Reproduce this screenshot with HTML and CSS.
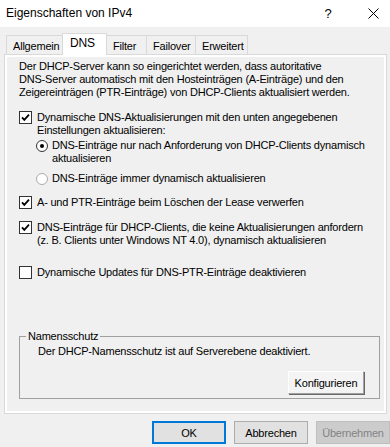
FILE: index.html
```html
<!DOCTYPE html>
<html lang="de">

<head>
  <meta charset="UTF-8">
  <meta name="viewport" content="width=device-width, initial-scale=1.0">
  <title>Eigenschaften von IPv4</title>
  <link rel="stylesheet" href="styles.css">
</head>

<body>
  <div class="titlebar">
    <span class="title">Eigenschaften von IPv4</span>
    <span class="help">?</span>
    <span class="close">
      <svg width="11" height="11" viewBox="0 0 11 11"><path d="M0.5 0.5 L10.5 10.5 M10.5 0.5 L0.5 10.5" stroke="#000" stroke-width="1" fill="none" /></svg>
    </span>
  </div>

  <div class="content">
    <div class="tabs">
      <div class="tab tab-general">Allgemein</div>
      <div class="tab tab-dns active">DNS</div>
      <div class="tab tab-filter">Filter</div>
      <div class="tab tab-failover">Failover</div>
      <div class="tab tab-advanced">Erweitert</div>
    </div>

    <div class="panel">
      <div class="page">
        <p class="intro">
          Der DHCP-Server kann so eingerichtet werden, dass autoritative<br>
          DNS-Server automatisch mit den Hosteinträgen (A-Einträge) und den<br>
          Zeigereinträgen (PTR-Einträge) von DHCP-Clients aktualisiert werden.
        </p>

        <div class="option opt-dyn">
          <svg class="box" width="13" height="13" viewBox="0 0 13 13"><rect x="0.5" y="0.5" width="12" height="12" fill="#fff" stroke="#333" /><path d="M3 6.3 L5.3 8.8 L10 3.6" fill="none" stroke="#000" stroke-width="1.8" /></svg>
          <span>Dynamische DNS-Aktualisierungen mit den unten angegebenen<br>Einstellungen aktualisieren:</span>
        </div>

        <div class="option sub opt-r1">
          <svg class="radio" width="12" height="12" viewBox="0 0 12 12"><circle cx="6" cy="6" r="5.5" fill="#fff" stroke="#333" /><circle cx="6" cy="6" r="2" fill="#000" /></svg>
          <span>DNS-Einträge nur nach Anforderung von DHCP-Clients dynamisch<br>aktualisieren</span>
        </div>

        <div class="option sub opt-r2">
          <svg class="radio" width="12" height="12" viewBox="0 0 12 12"><circle cx="6" cy="6" r="5.5" fill="#fff" stroke="#aaa" /></svg>
          <span>DNS-Einträge immer dynamisch aktualisieren</span>
        </div>

        <div class="option opt-lease">
          <svg class="box" width="13" height="13" viewBox="0 0 13 13"><rect x="0.5" y="0.5" width="12" height="12" fill="#fff" stroke="#333" /><path d="M3 6.3 L5.3 8.8 L10 3.6" fill="none" stroke="#000" stroke-width="1.8" /></svg>
          <span>A- und PTR-Einträge beim Löschen der Lease verwerfen</span>
        </div>

        <div class="option opt-clients">
          <svg class="box" width="13" height="13" viewBox="0 0 13 13"><rect x="0.5" y="0.5" width="12" height="12" fill="#fff" stroke="#333" /><path d="M3 6.3 L5.3 8.8 L10 3.6" fill="none" stroke="#000" stroke-width="1.8" /></svg>
          <span>DNS-Einträge für DHCP-Clients, die keine Aktualisierungen anfordern<br>(z. B. Clients unter Windows NT 4.0), dynamisch aktualisieren</span>
        </div>

        <div class="option opt-ptr">
          <svg class="box" width="13" height="13" viewBox="0 0 13 13"><rect x="0.5" y="0.5" width="12" height="12" fill="#fff" stroke="#333" /></svg>
          <span>Dynamische Updates für DNS-PTR-Einträge deaktivieren</span>
        </div>

        <fieldset class="group">
          <legend>Namensschutz</legend>
          <p class="group-text">Der DHCP-Namensschutz ist auf Serverebene deaktiviert.</p>
          <div class="group-actions">
            <button type="button" class="btn-classic">Konfigurieren</button>
          </div>
        </fieldset>
      </div>
    </div>
  </div>

  <div class="buttons">
    <button type="button" class="btn default">OK</button>
    <button type="button" class="btn">Abbrechen</button>
    <button type="button" class="btn" disabled>Übernehmen</button>
  </div>
</body>

</html>
```

FILE: styles.css
```css
body {
  margin: 0;
  background-color: #f0f0f0;
  font-family: "Liberation Sans", Arial, sans-serif;
  font-size: 11px;
  line-height: 13px;
  letter-spacing: -0.2px;
  color: #000;
}

.titlebar {
  display: flex;
  align-items: center;
  height: 27px;
  background-color: #fff;
}

.title {
  flex: 1;
  padding-left: 6px;
  font-size: 12px;
  letter-spacing: 0;
}

.help {
  width: 20px;
  margin-right: 18px;
  text-align: center;
  font-size: 13px;
}

.close {
  display: flex;
  justify-content: center;
  width: 34px;
}

.content {
  padding: 6px 3px 0 4px;
}

.tabs {
  display: flex;
  align-items: flex-end;
  padding-left: 2px;
  height: 21px;
}

.tab {
  height: 19px;
  line-height: 20px;
  padding-left: 6px;
  border: 1px solid #d9d9d9;
  border-bottom: none;
  margin-left: -1px;
  box-sizing: border-box;
  background-color: #f0f0f0;
  white-space: nowrap;
}

.tab:first-child {
  margin-left: 0;
}

.tab-general { width: 57px; }
.tab-dns { width: 45px; }
.tab-filter { width: 41px; }
.tab-failover { width: 50px; }
.tab-advanced { width: 53px; }

.tab.active {
  position: relative;
  z-index: 1;
  height: 22px;
  line-height: 19px;
  margin-bottom: -1px;
  padding-left: 7px;
  background-color: #fff;
  font-size: 12px;
}

.panel {
  border: 1px solid #d9d9d9;
  background-color: #fff;
  padding: 2px;
}

.page {
  background-color: #f0f0f0;
  padding: 3px 4px 0 12px;
  overflow: hidden;
}

.intro {
  margin: 0;
}

.option {
  display: flex;
  align-items: flex-start;
}

.option .box {
  flex: none;
  margin-right: 5px;
}

.option .radio {
  flex: none;
  margin-top: 1px;
  margin-right: 4px;
}

.sub {
  margin-left: 17px;
}

.opt-dyn { margin-top: 12px; }
.opt-r1 { margin-top: 2px; }
.opt-r2 { margin-top: 7px; }
.opt-lease { margin-top: 11px; }
.opt-clients { margin-top: 12px; }
.opt-ptr { margin-top: 19px; }

.group {
  margin: 51px 0 12px 0;
  padding: 0 15px 4px 6px;
  border: 1px solid #a0a0a0;
  min-width: 0;
}

.group legend {
  padding: 0 2px;
}

.group-text {
  margin: 2px 0 0 12px;
}

.group-actions {
  display: flex;
  justify-content: flex-end;
  margin-top: 13px;
}

button {
  font-family: inherit;
  font-size: 11px;
  letter-spacing: inherit;
  color: #000;
  box-sizing: border-box;
  height: 23px;
  padding: 0;
}

.btn-classic {
  width: 76px;
  background-color: #f4f4f4;
  border: 1px solid;
  border-color: #fff #a0a0a0 #a0a0a0 #fff;
  box-shadow: 1px 1px 0 #696969;
}

.buttons {
  display: flex;
  justify-content: flex-end;
  gap: 8px;
  margin-top: 7px;
  padding-right: 0;
}

.btn {
  width: 74px;
  background-color: #e1e1e1;
  border: 1px solid #adadad;
}

.btn.default {
  border: 2px solid #0078d7;
}

.btn:disabled {
  background-color: #cccccc;
  border-color: #bfbfbf;
  color: #838383;
}
```
